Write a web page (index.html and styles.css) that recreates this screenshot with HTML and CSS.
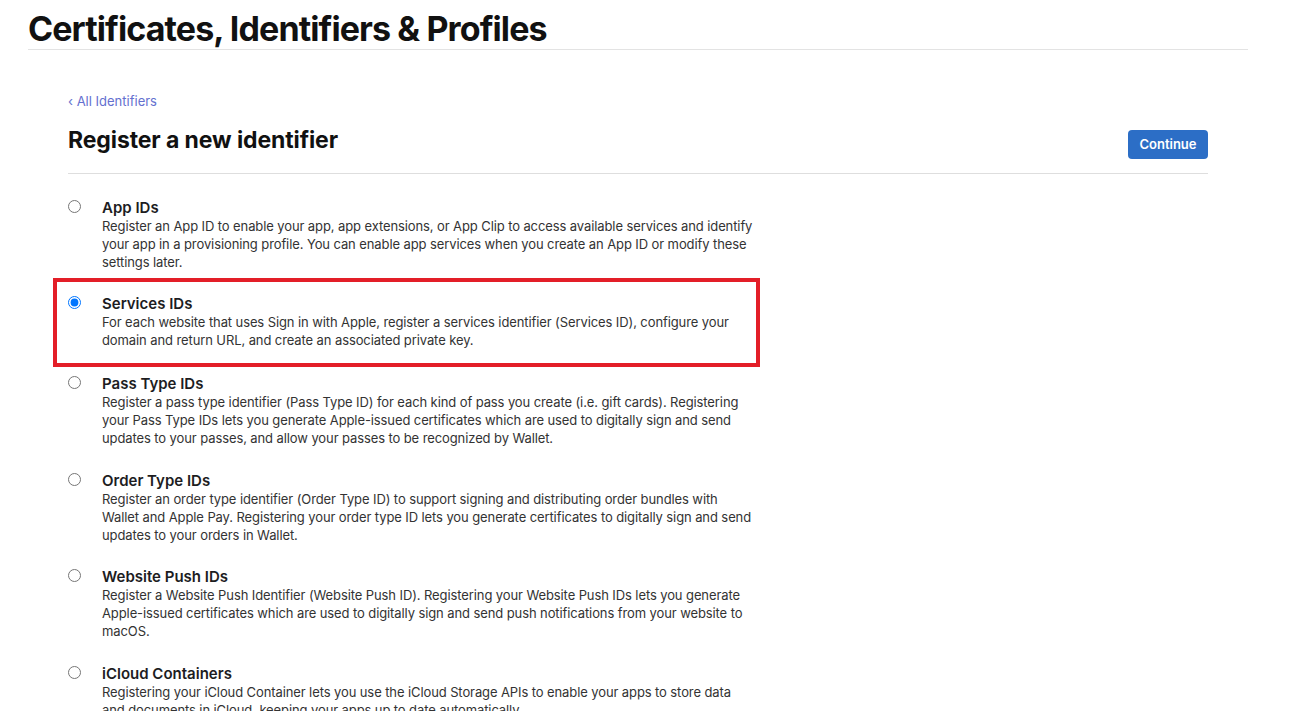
FILE: index.html
```html
<!DOCTYPE html>
<html lang="en">
<head>
  <meta charset="UTF-8" />
  <title>Register a new identifier</title>
  <link rel="stylesheet" href="styles.css">
</head>
<body>

<div class="page">
  <h1 class="page-title">Certificates, Identifiers &amp; Profiles</h1>

  <main class="content">
    <a class="back-link" href="#">&lsaquo; All Identifiers</a>

    <div class="head-row">
      <h2>Register a new identifier</h2>
      <button class="continue-btn" type="button">Continue</button>
    </div>

    <ul class="id-list">
      <li class="id-item">
        <input type="radio" name="idtype" />
        <div class="id-text">
          <div class="id-title">App IDs</div>
          <p>Register an App ID to enable your app, app extensions, or App Clip to access available services and identify your app in a provisioning profile. You can enable app services when you create an App ID or modify these settings later.</p>
        </div>
      </li>
      <li class="id-item selected">
        <input type="radio" name="idtype" checked />
        <div class="id-text">
          <div class="id-title">Services IDs</div>
          <p>For each website that uses Sign in with Apple, register a services identifier (Services ID), configure your domain and return URL, and create an associated private key.</p>
        </div>
        <div class="highlight"></div>
      </li>
      <li class="id-item">
        <input type="radio" name="idtype" />
        <div class="id-text">
          <div class="id-title">Pass Type IDs</div>
          <p>Register a pass type identifier (Pass Type ID) for each kind of pass you create (i.e. gift cards). Registering your Pass Type IDs lets you generate Apple-issued certificates which are used to digitally sign and send updates to your passes, and allow your passes to be recognized by Wallet.</p>
        </div>
      </li>
      <li class="id-item">
        <input type="radio" name="idtype" />
        <div class="id-text">
          <div class="id-title">Order Type IDs</div>
          <p>Register an order type identifier (Order Type ID) to support signing and distributing order bundles with Wallet and Apple Pay. Registering your order type ID lets you generate certificates to digitally sign and send updates to your orders in Wallet.</p>
        </div>
      </li>
      <li class="id-item">
        <input type="radio" name="idtype" />
        <div class="id-text">
          <div class="id-title">Website Push IDs</div>
          <p>Register a Website Push Identifier (Website Push ID). Registering your Website Push IDs lets you generate Apple-issued certificates which are used to digitally sign and send push notifications from your website to macOS.</p>
        </div>
      </li>
      <li class="id-item">
        <input type="radio" name="idtype" />
        <div class="id-text">
          <div class="id-title">iCloud Containers</div>
          <p>Registering your iCloud Container lets you use the iCloud Storage APIs to enable your apps to store data and documents in iCloud, keeping your apps up to date automatically.</p>
        </div>
      </li>
    </ul>
  </main>
</div>

</body>
</html>
```

FILE: styles.css
```css
body {
  margin: 0; font-family: Inter, 'Noto Sans', sans-serif; background: #fff; color: #1d1d1f;
}
.page {
  width: 1220px; margin-left: 28px;
}
.page-title {
  margin: 0; padding-top: 9px;
  font-size: 34px; line-height: 40px; font-weight: 700; letter-spacing: -0.9px;
  color: #111;
  border-bottom: 1px solid #e3e3e3;
}
.content {
  padding: 42px 40px 0;
}
.back-link {
  display: block; font-size: 13px; line-height: 18px;
  color: #6470cf; text-decoration: none;
}
.head-row {
  display: flex; justify-content: space-between; align-items: flex-start;
  margin-top: 16px; padding-bottom: 14px;
  border-bottom: 1px solid #dedede;
}
.head-row h2 {
  margin: 0; font-size: 23px; line-height: 28px; font-weight: 700; color: #111;
  letter-spacing: -0.1px;
}
.continue-btn {
  margin-top: 4px;
  width: 80px; height: 29px; padding: 0 0 2px;
  background: #2c6ec6; color: white;
  border: none; border-radius: 4px;
  font-family: inherit; font-size: 13px; font-weight: 600;
  cursor: pointer;
}
.id-list {
  list-style: none; margin: 0; padding: 25px 0 0;
}
.id-item {
  position: relative;
  display: flex; align-items: flex-start;
  margin-bottom: 24.4px;
}
.id-item.selected {
  margin-bottom: 26px;
}
.id-item input {
  width: 13px; height: 13px; margin: 1px 21px 0 0;
  flex: none;
}
.id-text {
  width: 652px;
}
.id-title {
  font-size: 15px; line-height: 18px; font-weight: 600; color: #1d1d1f;
}
.id-text p {
  margin: 0; font-size: 13px; line-height: 18px; color: #333;
  letter-spacing: -0.1px;
}
.highlight {
  position: absolute; left: -15px; top: -17px;
  width: 707px; height: 89px;
  border: 4px solid #e31e28; box-sizing: border-box;
  pointer-events: none;
}
```
